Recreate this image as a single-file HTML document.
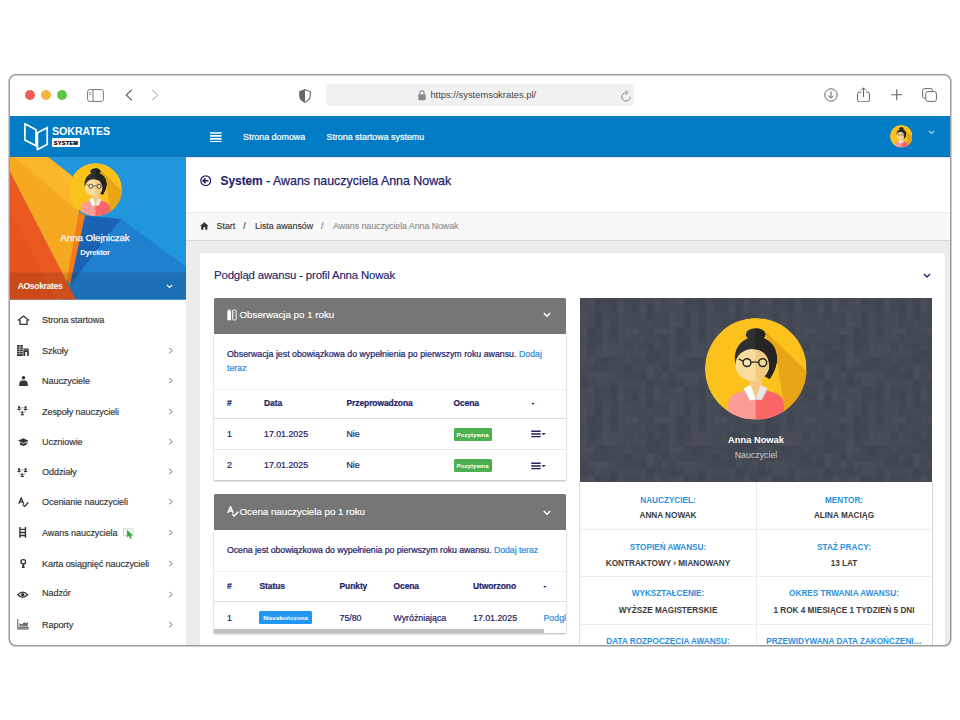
<!DOCTYPE html>
<html lang="pl">
<head>
<meta charset="utf-8">
<title>System Sokrates - Awans nauczyciela</title>
<style>
*{box-sizing:border-box;margin:0;padding:0}
html,body{width:960px;height:720px;background:#fff;overflow:hidden}
body{font-family:"Liberation Sans",sans-serif;color:#333;position:relative}
.abs{position:absolute}
#frame{position:absolute;left:9px;top:75px;width:942px;height:571px;border-radius:6px;background:#fff;overflow:hidden}
#in{position:absolute;left:-9px;top:-75px;width:960px;height:720px}
/* everything inside #in is positioned in page coordinates */
#chrome{left:0;top:75px;width:960px;height:42px;background:#fff}
.dot{position:absolute;width:10px;height:10px;border-radius:50%;top:90px}
#url{left:326px;top:84px;width:308px;height:22px;background:#f1f1f1;border-radius:4px}
#urltxt{left:430.4px;top:88.6px;font-size:9.4px;color:#444;white-space:nowrap;letter-spacing:0}
#nav{left:0;top:116px;width:960px;height:41px;background:#037cc6}
.navl{position:absolute;top:132px;font-size:8.9px;color:#fff;white-space:nowrap;letter-spacing:0;-webkit-text-stroke:0.2px #fff}
#side{left:0;top:157px;width:186px;height:500px;background:#fff}
#main{left:186px;top:157px;width:774px;height:500px;background:#ececec}
#hdr{left:186px;top:157px;width:774px;height:54.5px;background:#fff}
#bc{left:186px;top:211.5px;width:774px;height:29px;background:#f8f8f8;border-top:1px solid #ececec;border-bottom:1px solid #d9d9d9}
#title{left:220.6px;top:174px;font-size:12.4px;color:#231f6b;-webkit-text-stroke:0.25px #231f6b;white-space:nowrap;letter-spacing:-0.1px}
.bct{position:absolute;top:221px;font-size:8.9px;color:#333;white-space:nowrap;letter-spacing:0;-webkit-text-stroke:0.12px currentColor}
#card{left:200px;top:253px;width:745px;height:420px;background:#fff;border-radius:2px;box-shadow:0 0 1px rgba(0,0,0,.15)}
#cardt{left:214px;top:269.3px;font-size:11.4px;color:#231f6b;-webkit-text-stroke:0.15px #231f6b;white-space:nowrap;letter-spacing:-0.15px}
.ph{position:absolute;left:214px;width:352px;height:36.5px;background:#767676;border-radius:1.5px 1.5px 0 0}
.pht{position:absolute;font-size:9.8px;color:#fff;white-space:nowrap;letter-spacing:-0.03px;-webkit-text-stroke:0.15px #fff}
.pb{position:absolute;left:214px;width:352px;background:#fff;box-shadow:0 1px 2px rgba(0,0,0,.3)}
.t{position:absolute;font-size:8.8px;color:#231f6b;white-space:nowrap;letter-spacing:0;-webkit-text-stroke:0.22px currentColor}
.th{font-weight:bold;font-size:8.5px;letter-spacing:-0.1px}
.lnk{color:#2b8fe0}
.hl{position:absolute;left:214px;width:352px;height:1px;background:#e4e4e4}
.badge{position:absolute;height:12.8px;border-radius:1.5px;color:#fff;font-size:6.2px;font-weight:bold;text-align:center;line-height:14.4px;white-space:nowrap}
.mi{position:absolute;left:42px;font-size:9.1px;color:#333;white-space:nowrap;letter-spacing:-0.1px;-webkit-text-stroke:0.15px #333}
.chev{position:absolute;left:167.7px;width:5.4px;height:7.2px}
.ico{position:absolute}
#prof{left:580px;top:297.5px;width:352px;height:184px;background:#3f454f;overflow:hidden}
#info{left:579px;top:481.5px;width:354px;height:200px;background:#fff;border-right:1px solid #d4d4d4;border-left:1px solid #dedede}
.il{position:absolute;font-size:8.2px;color:#2b8fe0;font-weight:bold;text-align:center;white-space:nowrap;letter-spacing:0}
.iv{position:absolute;font-size:8.2px;color:#3a3a3a;font-weight:bold;text-align:center;white-space:nowrap;letter-spacing:0}
</style>
</head>
<body>
<svg width="0" height="0" style="position:absolute"><defs>
<clipPath id="avc"><circle cx="50" cy="50" r="50"/></clipPath>
<clipPath id="avr"><rect x="49.8" y="0" width="60" height="100"/></clipPath>
<symbol id="avatar" viewBox="0 0 100 100"><g clip-path="url(#avc)">
<circle cx="50" cy="50" r="50" fill="#fbc11d"/>
<polygon points="57,11 110,62 110,110 77,110 77,80 70.5,40" fill="#e8a516"/>
<g fill="#2f2f2f"><g id="avhair"><ellipse cx="49.8" cy="16.2" rx="9.6" ry="6.2"/><path d="M50 18.6 C38 18.6 29.4 27.5 29.4 39.5 C29.4 43 30 46 31 48 L50 52 L63.5 60 C69 52 71 45 70.7 38.5 C70.2 27 62 18.6 50 18.6Z"/></g></g>
<g clip-path="url(#avr)" fill="#242424"><use href="#avhair"/></g>
<rect x="43.4" y="57" width="12.8" height="24" fill="#f3c982"/>
<ellipse cx="46.6" cy="46.2" rx="16.6" ry="15.8" fill="#f9dd9f"/>
<g clip-path="url(#avr)"><ellipse cx="46.6" cy="46.2" rx="16.6" ry="15.8" fill="#f1cb84"/></g>
<path d="M29.6 43 C31 33.5 38 30 46 30.6 L49.8 30.9 V25 C38 24 30 32 29.6 43Z" fill="#2f2f2f"/>
<path d="M49.8 30.9 C56 31.4 61.5 35 62.8 44 C63.6 50 63.8 55 63.5 60 C69 52 71 45 70.7 38.5 C69 30 60 24.5 49.8 25Z" fill="#242424"/>
<path d="M22.8 100 V86 Q22.8 76 32 73.5 L44 70 L49.8 80.3 L56 70 L68 73.5 Q77.7 76 77.7 86 V100Z" fill="#fb9c96"/>
<path d="M49.8 100 V80.3 L56 70 L68 73.5 Q77.7 76 77.7 86 V100Z" fill="#fa6568"/>
<path d="M38 69.5 L45 66 L49.8 80.3 L44.3 81.2Z" fill="#fff"/>
<path d="M61.6 69.5 L54.8 66 L49.8 80.3 L55.8 80.8Z" fill="#e6e6e6"/>
<circle cx="41.3" cy="43.9" r="3.9" fill="#fbe7b6" stroke="#2a2a2a" stroke-width="1.5"/>
<circle cx="56.8" cy="43.9" r="3.9" fill="#f6d99c" stroke="#2a2a2a" stroke-width="1.5"/>
<path d="M45.8 43.6 Q49 42.6 52.3 43.6 M37.6 42.6 L33 40.2" fill="none" stroke="#2a2a2a" stroke-width="1.2"/>
</g></symbol>
</defs></svg>
<div id="frame"><div id="in">

<!-- browser chrome -->
<div id="chrome" class="abs"></div>
<div class="dot" style="left:25px;background:#ee5f57"></div>
<div class="dot" style="left:41px;background:#f5b63f"></div>
<div class="dot" style="left:57px;background:#5dc647"></div>
<div id="url" class="abs"></div>
<div id="urltxt" class="abs">https://systemsokrates.pl/</div>


<!-- chrome icons -->
<svg class="abs" style="left:86.5px;top:88.5px" width="17" height="13" viewBox="0 0 17 13"><rect x="0.6" y="0.6" width="15.8" height="11.8" rx="2" fill="none" stroke="#777" stroke-width="1"/><path d="M6 0.6v11.8" stroke="#777" stroke-width="1"/><path d="M2.2 3.4h2.2 M2.2 5.4h2.2" stroke="#777" stroke-width="0.8"/></svg>
<svg class="abs" style="left:125px;top:89px" width="8" height="12" viewBox="0 0 8 12"><path d="M6.8 0.7 L1.2 6 L6.8 11.3" fill="none" stroke="#6a6a6a" stroke-width="1.2"/></svg>
<svg class="abs" style="left:151px;top:89px" width="8" height="12" viewBox="0 0 8 12"><path d="M1.2 0.7 L6.8 6 L1.2 11.3" fill="none" stroke="#c4c4c4" stroke-width="1.2"/></svg>
<svg class="abs" style="left:298.5px;top:88.5px" width="12" height="14" viewBox="0 0 12 14"><path d="M6 0.7 L11.2 2.6 V7 Q11.2 11 6 13.3 Q0.8 11 0.8 7 V2.6z" fill="#fff" stroke="#666" stroke-width="1.1"/><path d="M6 0.7 V13.3 Q0.8 11 0.8 7 V2.6z" fill="#666"/></svg>
<svg class="abs" style="left:417.5px;top:90px" width="8" height="10.5" viewBox="0 0 8 10.5"><rect x="0.3" y="4.3" width="7.4" height="6" rx="0.8" fill="#8a8a8a"/><path d="M1.9 4.5 V3 Q1.9 0.8 4 0.8 Q6.1 0.8 6.1 3 V4.5" fill="none" stroke="#8a8a8a" stroke-width="1.1"/></svg>
<svg class="abs" style="left:620.5px;top:89.5px" width="10.5" height="12" viewBox="0 0 10.5 12"><path d="M9.3 6.8 A4.2 4.2 0 1 1 5.2 2.6" fill="none" stroke="#777" stroke-width="0.9"/><path d="M4.6 0.4 L7 2.6 L4.6 4.6" fill="none" stroke="#777" stroke-width="0.9"/></svg>
<svg class="abs" style="left:823.5px;top:88px" width="14" height="14" viewBox="0 0 14 14"><circle cx="7" cy="7" r="6.2" fill="none" stroke="#666" stroke-width="1"/><path d="M7 3.5v6.5 M4.4 7.6 L7 10.2 L9.6 7.6" fill="none" stroke="#666" stroke-width="1"/></svg>
<svg class="abs" style="left:856.5px;top:86.5px" width="13" height="15.5" viewBox="0 0 13 15.5"><path d="M4.3 5.2 H2.2 Q0.6 5.2 0.6 6.8 V13.2 Q0.6 14.8 2.2 14.8 H10.8 Q12.4 14.8 12.4 13.2 V6.8 Q12.4 5.2 10.8 5.2 H8.7" fill="none" stroke="#666" stroke-width="1"/><path d="M6.5 10V1 M4 3.3 L6.5 0.8 L9 3.3" fill="none" stroke="#666" stroke-width="1"/></svg>
<svg class="abs" style="left:890.5px;top:89.2px" width="11.5" height="11.5" viewBox="0 0 11.5 11.5"><path d="M5.75 0.3v10.9 M0.3 5.75h10.9" stroke="#666" stroke-width="1.1"/></svg>
<svg class="abs" style="left:921.5px;top:88px" width="15" height="14" viewBox="0 0 15 14"><path d="M3.7 10.2 H2.6 Q0.6 10.2 0.6 8.2 V2.6 Q0.6 0.6 2.6 0.6 H8.6 Q10.6 0.6 10.6 2.6 V3.4" fill="none" stroke="#666" stroke-width="1"/><rect x="3.8" y="3.6" width="10.6" height="9.8" rx="2" fill="#fff" stroke="#666" stroke-width="1"/></svg>

<!-- navbar -->
<div id="nav" class="abs"></div>
<div class="navl" style="left:243px">Strona domowa</div>
<div class="navl" style="left:326.5px">Strona startowa systemu</div>


<!-- navbar contents -->
<div class="abs" style="left:0;top:156px;width:960px;height:1px;background:#1a70ac"></div>
<svg class="abs" style="left:24px;top:123px" width="24.5" height="28" viewBox="0 0 24.5 28"><path d="M0.9 0.8 L12 6.7 V22.8 L0.9 17z M13.4 26.4 V9.8 L23.2 4.7 V21.4 L12.6 27" fill="none" stroke="#fff" stroke-width="1.7" stroke-linejoin="miter"/></svg>
<div class="abs" style="left:52px;top:125.2px;font-size:10.6px;font-weight:bold;color:#fff;letter-spacing:0;white-space:nowrap">SOKRATES</div>
<div class="abs" style="left:52.2px;top:138.4px;width:27.4px;height:8.6px;background:#fff;border-radius:1px"></div>
<div class="abs" style="left:52.5px;top:139px;width:27px;height:8px;line-height:8.6px;text-align:center;font-size:5.3px;font-weight:bold;color:#111;letter-spacing:0.45px;white-space:nowrap;text-shadow:0.2px 0 0 #111">SYSTEM</div>
<svg class="abs" style="left:210.2px;top:131.7px" width="11.6" height="10.8" viewBox="0 0 12.5 11" preserveAspectRatio="none"><path d="M0 1h12.5 M0 4h12.5 M0 7h12.5 M0 10h12.5" stroke="#fff" stroke-width="1.7"/></svg>
<svg class="abs" style="left:889.5px;top:125px" width="22.6" height="22.6" viewBox="0 0 100 100"><use href="#avatar"/></svg>
<svg class="abs" style="left:928px;top:130px" width="7" height="5" viewBox="0 0 7 5"><path d="M0.8 0.8 L3.5 3.5 L6.2 0.8" fill="none" stroke="#a9d9ff" stroke-width="1.2"/></svg>

<!-- main -->
<div id="main" class="abs"></div>
<div id="hdr" class="abs"></div>
<div id="bc" class="abs"></div>
<div class="abs" style="left:186px;top:157px;width:774px;height:1px;background:#cfe3f3"></div>
<div id="title" class="abs"><b style="font-size:12px;-webkit-text-stroke:0.1px #231f6b">System</b><span style="letter-spacing:0"> - Awans nauczyciela Anna Nowak</span></div>
<div class="bct" style="left:216.5px">Start</div>
<div class="bct" style="left:243.2px">/</div>
<div class="bct" style="left:255px">Lista awansów</div>
<div class="bct" style="left:321px;color:#777">/</div>
<div class="bct" style="left:333px;color:#8c8c8c;letter-spacing:-0.08px">Awans nauczyciela Anna Nowak</div>


<!-- header icons -->
<svg class="abs" style="left:199.6px;top:174.6px" width="11.4" height="11.4" viewBox="0 0 11.4 11.4"><circle cx="5.7" cy="5.7" r="4.9" fill="none" stroke="#231f6b" stroke-width="1.3"/><path d="M8.4 5.7H3.6 M5.6 3.2 L3.1 5.7 L5.6 8.2" fill="none" stroke="#231f6b" stroke-width="1.6"/></svg>
<svg class="abs" style="left:199.7px;top:221.5px" width="8.6" height="8" viewBox="0 0 8.6 8"><path d="M4.3 0.3 L8.6 4 H7.4 V7.8 H5.2 V5.2 H3.4 V7.8 H1.2 V4 H0z" fill="#333"/></svg>

<div id="card" class="abs"></div>
<div id="cardt" class="abs">Podgląd awansu - profil Anna Nowak</div>

<!-- panel 1 -->
<div class="pb" style="top:334px;height:145.5px"></div>
<div class="ph" style="top:297.5px"></div>
<svg class="abs" style="left:227px;top:309px" width="10" height="11.5" viewBox="0 0 10 11.5"><rect x="0.3" y="1.6" width="3.8" height="9.6" rx="0.5" fill="#fff"/><rect x="1.2" y="0.6" width="2" height="1.5" fill="#fff"/><rect x="5.6" y="1.1" width="3.6" height="9.8" rx="0.5" fill="none" stroke="#fff" stroke-width="0.9"/><path d="M5.6 3.5h1.8 M5.6 5.5h1.8 M5.6 7.5h1.8" stroke="#fff" stroke-width="0.5"/></svg>
<div class="pht" style="left:239.5px;top:309px">Obserwacja po 1 roku</div>
<svg class="abs" style="left:543.1px;top:312.4px" width="8" height="6" viewBox="0 0 8 6"><path d="M0.8 1 L4 4.2 L7.2 1" fill="none" stroke="#fff" stroke-width="1.5"/></svg>
<div class="t" style="left:227px;top:349px">Obserwacja jest obowiązkowa do wypełnienia po pierwszym roku awansu. <span class="lnk">Dodaj</span></div>
<div class="t lnk" style="left:227px;top:363px">teraz</div>
<div class="hl" style="top:388.5px;background:#f0f0f0"></div>
<div class="t th" style="left:227px;top:398px">#</div>
<div class="t th" style="left:264px;top:398px">Data</div>
<div class="t th" style="left:346.5px;top:398px">Przeprowadzona</div>
<div class="t th" style="left:453.5px;top:398px">Ocena</div>
<div class="t th" style="left:531.5px;top:398px">-</div>
<div class="hl" style="top:418px;background:#dcdcdc"></div>
<div class="t" style="left:227px;top:429.3px">1</div>
<div class="t" style="left:264px;top:429.3px">17.01.2025</div>
<div class="t" style="left:346.5px;top:429.3px">Nie</div>
<div class="badge" style="left:453.6px;top:428.1px;width:38px;background:#4caf50">Pozytywna</div>
<svg class="abs" style="left:531px;top:430px" width="15" height="8" viewBox="0 0 15 8"><path d="M0.2 1.2h9.5 M0.2 3.9h9.5 M0.2 6.6h9.5" stroke="#231f6b" stroke-width="1.45"/><path d="M10.7 2.9h4l-2 2.3z" fill="#231f6b"/></svg>
<div class="hl" style="top:449px;background:#e9e9e9"></div>
<div class="t" style="left:227px;top:460px">2</div>
<div class="t" style="left:264px;top:460px">17.01.2025</div>
<div class="t" style="left:346.5px;top:460px">Nie</div>
<div class="badge" style="left:453.6px;top:459px;width:38px;background:#4caf50">Pozytywna</div>
<svg class="abs" style="left:531px;top:461.7px" width="15" height="8" viewBox="0 0 15 8"><path d="M0.2 1.2h9.5 M0.2 3.9h9.5 M0.2 6.6h9.5" stroke="#231f6b" stroke-width="1.45"/><path d="M10.7 2.9h4l-2 2.3z" fill="#231f6b"/></svg>

<!-- panel 2 -->
<div class="pb" style="top:530px;height:102.5px;overflow:hidden">
  <div class="t lnk" style="left:329.5px;top:83.3px">Podgląd</div>
  <div class="abs" style="left:0;top:99px;width:330px;height:3.5px;background:#c1c1c1"></div>
</div>
<div class="ph" style="top:494px;height:36px"></div>
<svg class="abs" style="left:227px;top:505.5px" width="12" height="11" viewBox="0 0 12 11"><path d="M0.8 7 L3.5 0.8 L6.2 7 M1.7 5h3.6" fill="none" stroke="#fff" stroke-width="1.5"/><path d="M5.2 8 L7.2 10 L11.2 5.8" fill="none" stroke="#fff" stroke-width="1.5"/></svg>
<div class="pht" style="left:239.5px;top:505.5px">Ocena nauczyciela po 1 roku</div>
<svg class="abs" style="left:543.1px;top:509.9px" width="8" height="6" viewBox="0 0 8 6"><path d="M0.8 1 L4 4.2 L7.2 1" fill="none" stroke="#fff" stroke-width="1.5"/></svg>
<div class="t" style="left:227px;top:545px;letter-spacing:-0.07px">Ocena jest obowiązkowa do wypełnienia po pierwszym roku awansu. <span class="lnk">Dodaj teraz</span></div>
<div class="hl" style="top:570.5px;background:#f0f0f0"></div>
<div class="t th" style="left:227px;top:581px">#</div>
<div class="t th" style="left:259.5px;top:581px">Status</div>
<div class="t th" style="left:339.5px;top:581px">Punkty</div>
<div class="t th" style="left:393.5px;top:581px">Ocena</div>
<div class="t th" style="left:473px;top:581px">Utworzono</div>
<div class="t th" style="left:543.5px;top:581px">-</div>
<div class="hl" style="top:601px;background:#dcdcdc"></div>
<div class="t" style="left:227px;top:613.3px">1</div>
<div class="badge" style="left:258.8px;top:611.3px;width:53.6px;background:#2196f3">Niezakończona</div>
<div class="t" style="left:339.5px;top:613.3px">75/80</div>
<div class="t" style="left:393.5px;top:613.3px">Wyróżniająca</div>
<div class="t" style="left:473px;top:613.3px">17.01.2025</div>
<svg class="abs" style="left:922.5px;top:272.5px" width="8" height="6" viewBox="0 0 8 6"><path d="M1 1 L4 4 L7 1" fill="none" stroke="#231f6b" stroke-width="1.4"/></svg>

<!-- profile -->
<svg class="abs" style="left:580px;top:297.5px" width="352" height="184" viewBox="0 0 352 184"><defs><pattern id="tile" width="88.8" height="88.8" patternUnits="userSpaceOnUse"><rect x="0.4" y="0.4" width="6.6" height="6.6" fill="#fff" opacity="0.018"/><rect x="0.4" y="7.8" width="6.6" height="6.6" fill="#fff" opacity="0.018"/><rect x="0.4" y="15.2" width="6.6" height="6.6" fill="#fff" opacity="0.036"/><rect x="0.4" y="22.6" width="6.6" height="6.6" fill="#fff" opacity="0.036"/><rect x="0.4" y="30.0" width="6.6" height="6.6" fill="#fff" opacity="0.036"/><rect x="0.4" y="37.4" width="6.6" height="6.6" fill="#fff" opacity="0.018"/><rect x="0.4" y="44.8" width="6.6" height="6.6" fill="#fff" opacity="0.018"/><rect x="0.4" y="52.2" width="6.6" height="6.6" fill="#fff" opacity="0.036"/><rect x="0.4" y="59.6" width="6.6" height="6.6" fill="#fff" opacity="0.036"/><rect x="0.4" y="67.0" width="6.6" height="6.6" fill="#fff" opacity="0.018"/><rect x="0.4" y="81.8" width="6.6" height="6.6" fill="#000" opacity="0.04"/><rect x="7.8" y="0.4" width="6.6" height="6.6" fill="#fff" opacity="0.036"/><rect x="7.8" y="7.8" width="6.6" height="6.6" fill="#fff" opacity="0.018"/><rect x="7.8" y="15.2" width="6.6" height="6.6" fill="#fff" opacity="0.018"/><rect x="7.8" y="22.6" width="6.6" height="6.6" fill="#fff" opacity="0.018"/><rect x="7.8" y="30.0" width="6.6" height="6.6" fill="#000" opacity="0.04"/><rect x="7.8" y="37.4" width="6.6" height="6.6" fill="#000" opacity="0.04"/><rect x="7.8" y="44.8" width="6.6" height="6.6" fill="#000" opacity="0.04"/><rect x="7.8" y="59.6" width="6.6" height="6.6" fill="#fff" opacity="0.036"/><rect x="7.8" y="74.4" width="6.6" height="6.6" fill="#fff" opacity="0.036"/><rect x="15.2" y="0.4" width="6.6" height="6.6" fill="#000" opacity="0.04"/><rect x="15.2" y="15.2" width="6.6" height="6.6" fill="#000" opacity="0.04"/><rect x="15.2" y="22.6" width="6.6" height="6.6" fill="#000" opacity="0.04"/><rect x="15.2" y="37.4" width="6.6" height="6.6" fill="#000" opacity="0.04"/><rect x="15.2" y="52.2" width="6.6" height="6.6" fill="#fff" opacity="0.018"/><rect x="15.2" y="74.4" width="6.6" height="6.6" fill="#fff" opacity="0.036"/><rect x="15.2" y="81.8" width="6.6" height="6.6" fill="#fff" opacity="0.026"/><rect x="22.6" y="15.2" width="6.6" height="6.6" fill="#fff" opacity="0.018"/><rect x="22.6" y="22.6" width="6.6" height="6.6" fill="#fff" opacity="0.026"/><rect x="22.6" y="30.0" width="6.6" height="6.6" fill="#fff" opacity="0.026"/><rect x="22.6" y="37.4" width="6.6" height="6.6" fill="#fff" opacity="0.026"/><rect x="22.6" y="44.8" width="6.6" height="6.6" fill="#fff" opacity="0.036"/><rect x="22.6" y="52.2" width="6.6" height="6.6" fill="#fff" opacity="0.036"/><rect x="22.6" y="59.6" width="6.6" height="6.6" fill="#000" opacity="0.04"/><rect x="22.6" y="74.4" width="6.6" height="6.6" fill="#fff" opacity="0.036"/><rect x="22.6" y="81.8" width="6.6" height="6.6" fill="#fff" opacity="0.026"/><rect x="30.0" y="0.4" width="6.6" height="6.6" fill="#000" opacity="0.04"/><rect x="30.0" y="7.8" width="6.6" height="6.6" fill="#000" opacity="0.04"/><rect x="30.0" y="30.0" width="6.6" height="6.6" fill="#000" opacity="0.04"/><rect x="30.0" y="44.8" width="6.6" height="6.6" fill="#fff" opacity="0.036"/><rect x="30.0" y="52.2" width="6.6" height="6.6" fill="#fff" opacity="0.036"/><rect x="30.0" y="74.4" width="6.6" height="6.6" fill="#fff" opacity="0.026"/><rect x="37.4" y="0.4" width="6.6" height="6.6" fill="#fff" opacity="0.026"/><rect x="37.4" y="7.8" width="6.6" height="6.6" fill="#fff" opacity="0.036"/><rect x="37.4" y="15.2" width="6.6" height="6.6" fill="#fff" opacity="0.018"/><rect x="37.4" y="22.6" width="6.6" height="6.6" fill="#fff" opacity="0.026"/><rect x="37.4" y="30.0" width="6.6" height="6.6" fill="#fff" opacity="0.018"/><rect x="37.4" y="37.4" width="6.6" height="6.6" fill="#fff" opacity="0.026"/><rect x="37.4" y="44.8" width="6.6" height="6.6" fill="#fff" opacity="0.026"/><rect x="37.4" y="52.2" width="6.6" height="6.6" fill="#fff" opacity="0.026"/><rect x="37.4" y="81.8" width="6.6" height="6.6" fill="#fff" opacity="0.026"/><rect x="44.8" y="15.2" width="6.6" height="6.6" fill="#fff" opacity="0.018"/><rect x="44.8" y="22.6" width="6.6" height="6.6" fill="#fff" opacity="0.018"/><rect x="44.8" y="30.0" width="6.6" height="6.6" fill="#fff" opacity="0.036"/><rect x="44.8" y="37.4" width="6.6" height="6.6" fill="#fff" opacity="0.026"/><rect x="44.8" y="52.2" width="6.6" height="6.6" fill="#fff" opacity="0.026"/><rect x="44.8" y="59.6" width="6.6" height="6.6" fill="#fff" opacity="0.026"/><rect x="44.8" y="67.0" width="6.6" height="6.6" fill="#000" opacity="0.04"/><rect x="44.8" y="81.8" width="6.6" height="6.6" fill="#fff" opacity="0.018"/><rect x="52.2" y="7.8" width="6.6" height="6.6" fill="#000" opacity="0.04"/><rect x="52.2" y="30.0" width="6.6" height="6.6" fill="#fff" opacity="0.036"/><rect x="52.2" y="44.8" width="6.6" height="6.6" fill="#fff" opacity="0.026"/><rect x="52.2" y="52.2" width="6.6" height="6.6" fill="#fff" opacity="0.026"/><rect x="52.2" y="67.0" width="6.6" height="6.6" fill="#fff" opacity="0.018"/><rect x="52.2" y="81.8" width="6.6" height="6.6" fill="#fff" opacity="0.018"/><rect x="59.6" y="0.4" width="6.6" height="6.6" fill="#fff" opacity="0.018"/><rect x="59.6" y="7.8" width="6.6" height="6.6" fill="#fff" opacity="0.036"/><rect x="59.6" y="15.2" width="6.6" height="6.6" fill="#fff" opacity="0.018"/><rect x="59.6" y="37.4" width="6.6" height="6.6" fill="#fff" opacity="0.018"/><rect x="59.6" y="52.2" width="6.6" height="6.6" fill="#fff" opacity="0.026"/><rect x="59.6" y="74.4" width="6.6" height="6.6" fill="#000" opacity="0.04"/><rect x="59.6" y="81.8" width="6.6" height="6.6" fill="#fff" opacity="0.026"/><rect x="67.0" y="7.8" width="6.6" height="6.6" fill="#000" opacity="0.04"/><rect x="67.0" y="15.2" width="6.6" height="6.6" fill="#000" opacity="0.04"/><rect x="67.0" y="22.6" width="6.6" height="6.6" fill="#fff" opacity="0.018"/><rect x="67.0" y="44.8" width="6.6" height="6.6" fill="#000" opacity="0.04"/><rect x="67.0" y="59.6" width="6.6" height="6.6" fill="#000" opacity="0.04"/><rect x="67.0" y="67.0" width="6.6" height="6.6" fill="#fff" opacity="0.036"/><rect x="67.0" y="74.4" width="6.6" height="6.6" fill="#fff" opacity="0.036"/><rect x="67.0" y="81.8" width="6.6" height="6.6" fill="#000" opacity="0.04"/><rect x="74.4" y="0.4" width="6.6" height="6.6" fill="#fff" opacity="0.036"/><rect x="74.4" y="7.8" width="6.6" height="6.6" fill="#fff" opacity="0.036"/><rect x="74.4" y="30.0" width="6.6" height="6.6" fill="#fff" opacity="0.026"/><rect x="74.4" y="44.8" width="6.6" height="6.6" fill="#fff" opacity="0.018"/><rect x="74.4" y="52.2" width="6.6" height="6.6" fill="#000" opacity="0.04"/><rect x="74.4" y="67.0" width="6.6" height="6.6" fill="#fff" opacity="0.018"/><rect x="81.8" y="7.8" width="6.6" height="6.6" fill="#fff" opacity="0.018"/><rect x="81.8" y="30.0" width="6.6" height="6.6" fill="#fff" opacity="0.036"/><rect x="81.8" y="37.4" width="6.6" height="6.6" fill="#000" opacity="0.04"/><rect x="81.8" y="67.0" width="6.6" height="6.6" fill="#000" opacity="0.04"/><rect x="81.8" y="74.4" width="6.6" height="6.6" fill="#fff" opacity="0.036"/></pattern></defs><rect width="352" height="184" fill="#424853"/><rect width="352" height="184" fill="url(#tile)"/></svg>
<svg class="abs" style="left:705px;top:318px" width="101.6" height="101.6" viewBox="0 0 100 100"><use href="#avatar"/></svg>
<div class="abs" style="left:656px;width:200px;top:434.5px;text-align:center;font-size:9.3px;font-weight:bold;color:#fff;white-space:nowrap;letter-spacing:0">Anna Nowak</div>
<div class="abs" style="left:656px;width:200px;top:450px;text-align:center;font-size:8.8px;color:#c9ccd1;white-space:nowrap;letter-spacing:0">Nauczyciel</div>

<!-- info grid -->
<div id="info" class="abs"></div>
<div class="abs" style="left:755.5px;top:481.5px;width:1px;height:200px;background:#ececec"></div>
<div class="abs" style="left:580px;top:529px;width:352px;height:1px;background:#ececec"></div>
<div class="abs" style="left:580px;top:576px;width:352px;height:1px;background:#ececec"></div>
<div class="abs" style="left:580px;top:623.5px;width:352px;height:1px;background:#ececec"></div>
<div class="il" style="left:580px;width:176px;top:495.7px">NAUCZYCIEL:</div>
<div class="iv" style="left:580px;width:176px;top:510.9px">ANNA NOWAK</div>
<div class="il" style="left:756px;width:176px;top:495.7px">MENTOR:</div>
<div class="iv" style="left:756px;width:176px;top:510.9px">ALINA MACIĄG</div>
<div class="il" style="left:580px;width:176px;top:542.8px">STOPIEŃ AWANSU:</div>
<div class="iv" style="left:580px;width:176px;top:558.5px">KONTRAKTOWY › MIANOWANY</div>
<div class="il" style="left:756px;width:176px;top:542.8px">STAŻ PRACY:</div>
<div class="iv" style="left:756px;width:176px;top:558.5px">13 LAT</div>
<div class="il" style="left:580px;width:176px;top:589.4px">WYKSZTAŁCENIE:</div>
<div class="iv" style="left:580px;width:176px;top:605.6px">WYŻSZE MAGISTERSKIE</div>
<div class="il" style="left:756px;width:176px;top:589.4px">OKRES TRWANIA AWANSU:</div>
<div class="iv" style="left:756px;width:176px;top:605.6px">1 ROK 4 MIESIĄCE 1 TYDZIEŃ 5 DNI</div>
<div class="il" style="left:580px;width:176px;top:637.1px">DATA ROZPOCZĘCIA AWANSU:</div>
<div class="il" style="left:756px;width:176px;top:637.1px">PRZEWIDYWANA DATA ZAKOŃCZENI…</div>


<!-- sidebar -->
<div id="side" class="abs"></div>
<svg class="abs" style="left:0;top:157px" width="186.3" height="142.5" viewBox="0 0 186.3 142.5">
  <rect x="0" y="0" width="186.3" height="142.5" fill="#2196dc"/>
  <polygon points="121,62 186.3,110 186.3,142.5 60,142.5 70,128" fill="#1f80d0"/>
  <polygon points="85,58.5 121,62 70,128 68,122" fill="#1a62b2"/>
  <polygon points="9,0 48,0 72,19 79,55 68,122 66,124 9,13" fill="#f6a821"/>
  <polygon points="14,0 48,0 72,19 79,55" fill="#fab62c"/>
  <polygon points="79,55 85,58.5 70,128 67,122" fill="#f57c17"/>
  <polygon points="9,13 66,123 76,142.5 9,142.5" fill="#ea5a20"/>
  <polygon points="9,52 56,142.5 9,142.5" fill="#e4511c" opacity="0.6"/>
  <rect x="0" y="115.5" width="186.3" height="27" fill="#000" opacity="0.12"/>
</svg>
<svg class="abs" style="left:68.5px;top:163px" width="53" height="53" viewBox="0 0 100 100"><use href="#avatar"/></svg>
<div class="abs" style="left:20px;width:150px;top:231.5px;text-align:center;font-size:9.8px;color:#fff;white-space:nowrap;letter-spacing:-0.1px;-webkit-text-stroke:0.25px #fff;text-shadow:0 0 1px rgba(0,0,0,.15)">Anna Olejniczak</div>
<div class="abs" style="left:20px;width:150px;top:248px;text-align:center;font-size:7.6px;font-weight:bold;color:#fff;white-space:nowrap;letter-spacing:-0.2px">Dyrektor</div>
<div class="abs" style="left:17.7px;top:280.6px;font-size:8.5px;font-weight:bold;color:#fff;white-space:nowrap;letter-spacing:-0.3px">AOsokrates</div>
<svg class="abs" style="left:166px;top:283.6px" width="7" height="5" viewBox="0 0 7 5"><path d="M0.8 0.8 L3.5 3.5 L6.2 0.8" fill="none" stroke="#fff" stroke-width="1.1"/></svg>
<div class="mi" style="top:315px">Strona startowa</div>
<div class="mi" style="top:346px">Szkoły</div>
<svg class="chev" style="top:346.9px" viewBox="0 0 6 8"><path d="M1.5 1 L4.5 4 L1.5 7" fill="none" stroke="#666" stroke-width="1.1"/></svg>
<div class="mi" style="top:376px">Nauczyciele</div>
<svg class="chev" style="top:376.8px" viewBox="0 0 6 8"><path d="M1.5 1 L4.5 4 L1.5 7" fill="none" stroke="#666" stroke-width="1.1"/></svg>
<div class="mi" style="top:407px">Zespoły nauczycieli</div>
<svg class="chev" style="top:407.9px" viewBox="0 0 6 8"><path d="M1.5 1 L4.5 4 L1.5 7" fill="none" stroke="#666" stroke-width="1.1"/></svg>
<div class="mi" style="top:437px">Uczniowie</div>
<svg class="chev" style="top:437.8px" viewBox="0 0 6 8"><path d="M1.5 1 L4.5 4 L1.5 7" fill="none" stroke="#666" stroke-width="1.1"/></svg>
<div class="mi" style="top:467px">Oddziały</div>
<svg class="chev" style="top:468.2px" viewBox="0 0 6 8"><path d="M1.5 1 L4.5 4 L1.5 7" fill="none" stroke="#666" stroke-width="1.1"/></svg>
<div class="mi" style="top:497px">Ocenianie nauczycieli</div>
<svg class="chev" style="top:498.4px" viewBox="0 0 6 8"><path d="M1.5 1 L4.5 4 L1.5 7" fill="none" stroke="#666" stroke-width="1.1"/></svg>
<div class="mi" style="top:528px">Awans nauczyciela</div>
<svg class="chev" style="top:529.3px" viewBox="0 0 6 8"><path d="M1.5 1 L4.5 4 L1.5 7" fill="none" stroke="#666" stroke-width="1.1"/></svg>
<div class="mi" style="top:559px">Karta osiągnięć nauczycieli</div>
<svg class="chev" style="top:560.3px" viewBox="0 0 6 8"><path d="M1.5 1 L4.5 4 L1.5 7" fill="none" stroke="#666" stroke-width="1.1"/></svg>
<div class="mi" style="top:588px">Nadzór</div>
<svg class="chev" style="top:590.6px" viewBox="0 0 6 8"><path d="M1.5 1 L4.5 4 L1.5 7" fill="none" stroke="#666" stroke-width="1.1"/></svg>
<div class="mi" style="top:620px">Raporty</div>
<svg class="chev" style="top:621.3px" viewBox="0 0 6 8"><path d="M1.5 1 L4.5 4 L1.5 7" fill="none" stroke="#666" stroke-width="1.1"/></svg>

<!-- sidebar icons -->
<svg class="ico" style="left:16.5px;top:314.5px" width="13" height="10.5" viewBox="0 0 13 10.5"><path d="M1 5.5 L6.5 1 L12 5.5 M3 5 V9.5 H10 V5" fill="none" stroke="#333" stroke-width="1.3" stroke-linejoin="miter"/></svg>
<svg class="ico" style="left:17.2px;top:345px" width="12" height="11" viewBox="0 0 12 11"><path d="M0 0h5.8v11h-5.8z M6.4 3.4h5.4v7.6h-5.4z" fill="#333"/><path d="M0 2.1h5.8 M0 4.3h5.8 M0 6.5h5.8 M0 8.7h5.8" stroke="#fff" stroke-width="0.55"/><path d="M2.9 0v9" stroke="#fff" stroke-width="0.45"/><path d="M6.4 5h5.4" stroke="#fff" stroke-width="0.4"/><path d="M8.2 7h1.9v4h-1.9z" fill="#fff"/></svg>
<svg class="ico" style="left:18.7px;top:375.7px" width="9" height="10" viewBox="0 0 9 10"><circle cx="4.5" cy="1.8" r="1.75" fill="#333"/><path d="M0.2 10 V8 Q0.2 5 2.6 4.5 L4.5 4.1 L6.4 4.5 Q8.8 5 8.8 8 V10z" fill="#333"/><path d="M3.7 4.3 L4.5 8.6 L5.3 4.3z" fill="#fff"/><path d="M4.1 4.6h0.8l0.3 2.6-0.7 0.9-0.7-0.9z" fill="#333"/></svg>
<svg class="ico" style="left:17.3px;top:406.4px" width="10.6" height="9.7" viewBox="0 0 12 11"><g fill="#333"><circle cx="2.3" cy="1.3" r="1.25"/><path d="M0.3 4.4 Q0.3 2.6 2.3 2.6 Q4.3 2.6 4.3 4.4z"/><circle cx="9.7" cy="1.3" r="1.25"/><path d="M7.7 4.4 Q7.7 2.6 9.7 2.6 Q11.7 2.6 11.7 4.4z"/><circle cx="6" cy="7.3" r="1.25"/><path d="M4 10.4 Q4 8.6 6 8.6 Q8 8.6 8 10.4z"/></g><path d="M4.4 2.2h3.2 M2.3 5.2 L4.2 8 M9.7 5.2 L7.800 8" stroke="#333" stroke-width="0.9" stroke-dasharray="1.1 0.6" fill="none"/></svg>
<svg class="ico" style="left:17.9px;top:437.6px" width="10.6" height="8.4" viewBox="0 0 11 9.5" preserveAspectRatio="none"><path d="M5.5 0.3 L11 3 L5.5 5.7 L0 3z" fill="#333"/><path d="M2 4.8 V7.3 Q5.5 10 9 7.3 V4.8 L5.5 6.6z" fill="#333"/><path d="M10.3 3.2v3.5" stroke="#333" stroke-width="0.7"/></svg>
<svg class="ico" style="left:17.3px;top:467.6px" width="10.6" height="9.7" viewBox="0 0 12 11"><g fill="#333"><circle cx="2.3" cy="1.3" r="1.25"/><path d="M0.3 4.4 Q0.3 2.6 2.3 2.6 Q4.3 2.6 4.3 4.4z"/><circle cx="9.7" cy="1.3" r="1.25"/><path d="M7.7 4.4 Q7.7 2.6 9.7 2.6 Q11.7 2.6 11.7 4.4z"/><circle cx="6" cy="7.3" r="1.25"/><path d="M4 10.4 Q4 8.6 6 8.6 Q8 8.6 8 10.4z"/></g><path d="M4.4 2.2h3.2 M2.3 5.2 L4.2 8 M9.7 5.2 L7.800 8" stroke="#333" stroke-width="0.9" stroke-dasharray="1.1 0.6" fill="none"/></svg>
<svg class="ico" style="left:17.6px;top:496.8px" width="11" height="10.6" viewBox="0 0 12 11"><path d="M0.8 7 L3.5 0.8 L6.2 7 M1.7 5h3.6" fill="none" stroke="#333" stroke-width="1.45"/><path d="M5.2 8 L7.2 10 L11.2 5.8" fill="none" stroke="#333" stroke-width="1.45"/></svg>
<svg class="ico" style="left:19.3px;top:527px" width="7.4" height="10.8" viewBox="0 0 8 11.5" preserveAspectRatio="none"><path d="M1 0v11.5 M7 0v11.5 M1 2.5h6 M1 5.8h6 M1 9h6" fill="none" stroke="#333" stroke-width="1.5"/></svg>
<svg class="ico" style="left:19.7px;top:558.8px" width="6.6" height="9.4" viewBox="0 0 7 11" preserveAspectRatio="none"><circle cx="3.5" cy="3.3" r="2.5" fill="none" stroke="#333" stroke-width="1.5"/><path d="M3.5 6v4.5 M2 10.2h3 M2.2 8h2.6" fill="none" stroke="#333" stroke-width="1.5"/></svg>
<svg class="ico" style="left:17.4px;top:590.6px" width="11.4" height="7.6" viewBox="0 0 12 8.5"><path d="M0.6 4.25 Q6 -1.5 11.4 4.25 Q6 10 0.6 4.25z" fill="none" stroke="#333" stroke-width="1.4"/><circle cx="6" cy="4.25" r="2" fill="#333"/></svg>
<svg class="ico" style="left:17px;top:619.2px" width="11.8" height="10.4" viewBox="0 0 12.5 11"><path d="M0.8 0v9.2h11.7 M0 10.6h12.5" fill="none" stroke="#333" stroke-width="0.9"/><path d="M2.5 8 V5 L5 6.5 L7.5 4 L10 5.5 L11.5 3.5 V8z" fill="#777"/><path d="M2.5 5 L5 6.5 L7.5 4 L10 5.5 L11.5 3.5" fill="none" stroke="#333" stroke-width="0.8"/></svg>
<svg class="ico" style="left:122.5px;top:527.5px" width="11.5" height="11" viewBox="0 0 11.5 11"><rect x="0.6" y="0.8" width="9.4" height="7" fill="#f6f9f1" stroke="#c7cdbc" stroke-width="0.7"/><path d="M4.2 2.1 L4.2 9.3 L6 7.7 L7.4 10.6 L8.6 10 L7.2 7.2 L9.6 7.2z" fill="#35a845" stroke="#2a8f3a" stroke-width="0.3"/></svg>

</div></div>
<svg class="abs" style="left:0;top:0;pointer-events:none" width="960" height="720" viewBox="0 0 960 720"><rect x="9.25" y="74.8" width="941.5" height="571" rx="6.5" fill="none" stroke="#9c9c9c" stroke-width="1.5"/></svg>
</body>
</html>
